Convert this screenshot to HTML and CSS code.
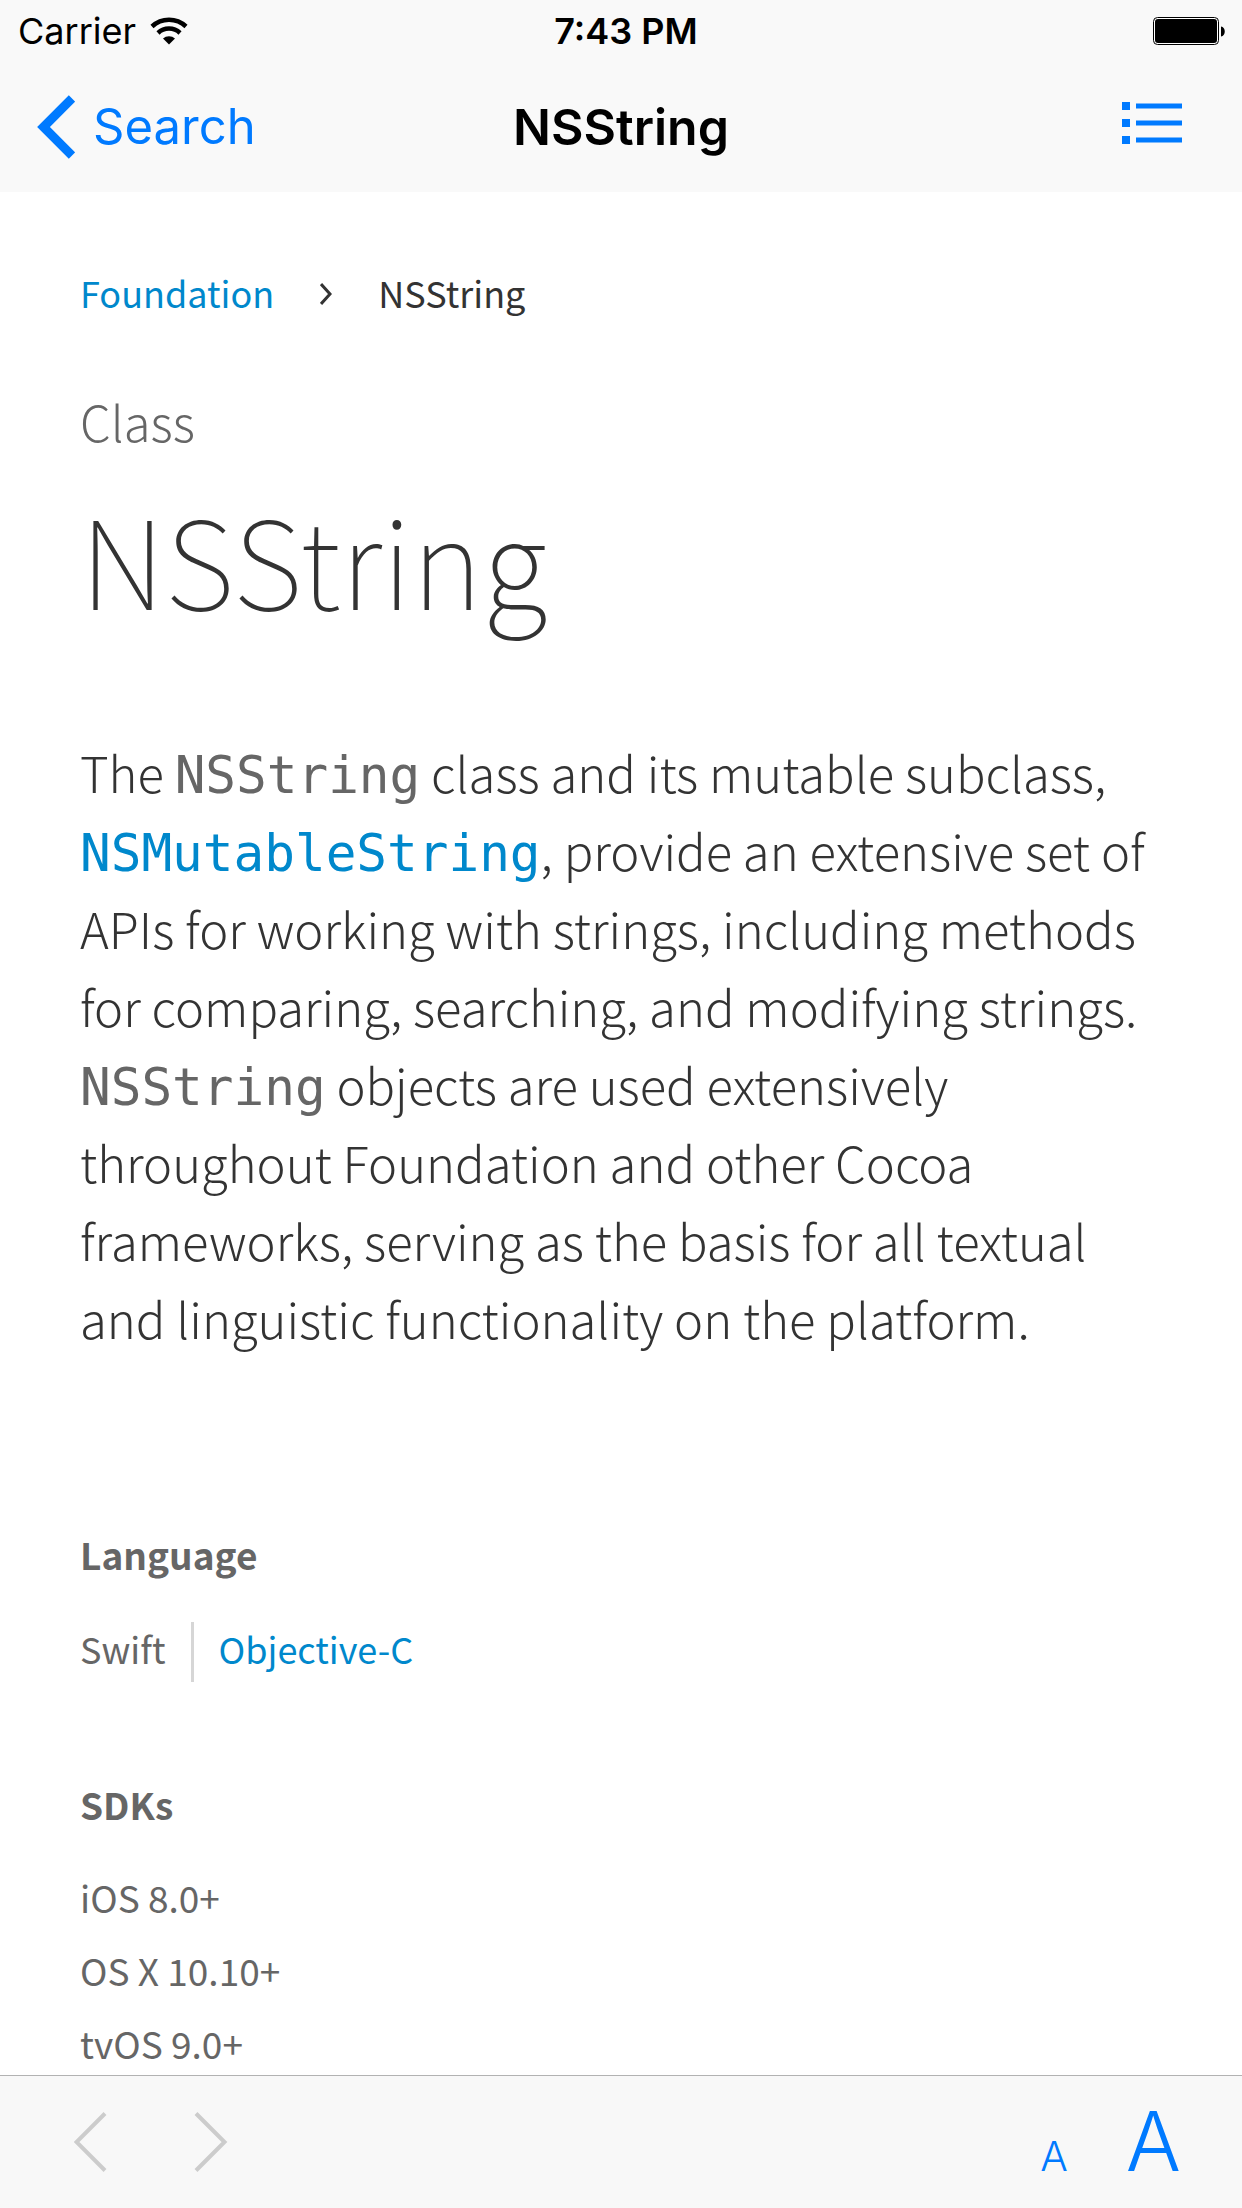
FILE: index.html
```html
<!DOCTYPE html>
<html lang="en">
<head>
<meta charset="utf-8">
<meta name="viewport" content="width=device-width, initial-scale=1">
<title>NSString</title>
<link rel="stylesheet" href="styles.css">
</head>
<body>
<header class="top">
  <div class="status">
    <div class="carrier">
      <span>Carrier</span>
      <svg class="wifi" viewBox="0 0 38 28" aria-hidden="true">
        <path d="M2 9.500A25 25 0 0 1 36 9.500" fill="none" stroke="#000" stroke-width="4.500"/>
        <path d="M8 16A16 16 0 0 1 30 16" fill="none" stroke="#000" stroke-width="4.500"/>
        <path d="M13 21.500A9 9 0 0 1 25 21.500L19 27.500Z"/>
      </svg>
    </div>
    <time class="clock">7:43 PM</time>
    <svg class="battery" viewBox="0 0 74 30" role="img" aria-label="Battery full">
      <rect x="1.500" y="1.500" width="65" height="27" rx="4" fill="#fff" stroke="#000" stroke-width="1"/>
      <rect x="3" y="3" width="62" height="24" rx="3" fill="#000"/>
      <path d="M69 10.500C74 11 74 20 69 20.500Z"/>
    </svg>
  </div>
  <nav class="navbar">
    <a class="back" href="#search">
      <svg class="back-icon" viewBox="0 0 38 64" aria-hidden="true"><path d="M35 3.500L6.500 32L35 60.500" fill="none" stroke="currentColor" stroke-width="9"/></svg>
      <span>Search</span>
    </a>
    <span class="nav-title">NSString</span>
    <button class="icon-button contents" type="button" aria-label="Contents">
      <svg class="list-icon" viewBox="0 0 60 42" aria-hidden="true"><path d="M0 0h8v8H0zM14 1.500h46v5H14zM0 17h8v8H0zM14 18.500h46v5H14zM0 34h8v8H0zM14 35.500h46v5H14z" fill="currentColor"/></svg>
    </button>
  </nav>
</header>
<main class="page">
  <nav class="crumbs" aria-label="Breadcrumb">
    <a href="#foundation">Foundation</a>
    <svg class="crumb-icon" viewBox="0 0 12 22" aria-hidden="true"><path d="M1 1L10 11L1 21" fill="none" stroke="currentColor" stroke-width="3"/></svg>
    <span>NSString</span>
  </nav>
  <p class="kind">Class</p>
  <h1 class="title">NSString</h1>
  <p class="intro">The <code>NSString</code> class and its mutable subclass, <a href="#mutable"><code>NSMutableString</code></a>, provide an extensive set of APIs for working with strings, including methods for comparing, searching, and modifying strings. <code>NSString</code> objects are used extensively throughout Foundation and other Cocoa frameworks, serving as the basis for all textual and linguistic functionality on the platform.</p>
  <section class="facts">
    <h2>Language</h2>
    <div class="languages">
      <span>Swift</span>
      <a class="language-link" href="#objc">Objective-C</a>
    </div>
  </section>
  <section class="facts">
    <h2>SDKs</h2>
    <ul class="sdks">
      <li>iOS 8.0+</li>
      <li>OS X 10.10+</li>
      <li>tvOS 9.0+</li>
    </ul>
  </section>
</main>
<footer class="toolbar">
  <button class="icon-button" type="button" aria-label="Back" disabled>
    <svg class="arrow" viewBox="0 0 34 60" aria-hidden="true"><path d="M31 1.500L2.500 30L31 58.500" fill="none" stroke="currentColor" stroke-width="4"/></svg>
  </button>
  <button class="icon-button next" type="button" aria-label="Forward" disabled>
    <svg class="arrow" viewBox="0 0 34 60" aria-hidden="true"><path d="M2 1.500L30.500 30L2 58.500" fill="none" stroke="currentColor" stroke-width="4"/></svg>
  </button>
  <div class="text-size">
    <button class="size-button small" type="button" aria-label="Smaller text">A</button>
    <button class="size-button large" type="button" aria-label="Larger text">A</button>
  </div>
</footer>
</body>
</html>
```
FILE: styles.css
```css
* { box-sizing: border-box; }
body {
  margin: 0;
  height: 100vh;
  display: flex;
  flex-direction: column;
  background: #fff;
  color: #333;
  font-family: "Noto Sans CJK SC", "Noto Sans", sans-serif;
  font-size: 36px;
  line-height: 74px;
}
h1, h2, p, ul { margin: 0; padding: 0; }
ul { list-style: none; }
a { color: #0088cc; text-decoration: none; }
svg { display: block; }
.icon-button, .size-button {
  border: 0;
  padding: 0;
  background: none;
  color: #007aff;
  font: inherit;
}
.icon-button:disabled { color: #ccc; }

.top {
  flex: none;
  background: #f9f9f9;
  color: #000;
  font-family: Inter, "Liberation Sans", sans-serif;
}
.status, .navbar {
  display: grid;
  grid-template-columns: 1fr auto 1fr;
  align-items: center;
}
.status {
  height: 62px;
  padding: 0 16px 0 18px;
  font-size: 36px;
  line-height: 62px;
}
.carrier { display: flex; align-items: center; gap: 14px; }
.wifi { width: 38px; height: 28px; }
.clock { padding-left: 8px; font-weight: 600; }
.battery { width: 74px; height: 30px; justify-self: end; }
.navbar {
  height: 130px;
  padding: 0 37px;
  font-size: 50px;
}
.back { display: flex; align-items: center; gap: 18px; color: #007aff; font-size: 49px; }
.back-icon { width: 38px; height: 64px; }
.nav-title { font-weight: 600; }
.contents { justify-self: end; padding: 0 23px 8px 0; }
.list-icon { width: 60px; height: 42px; }

.page {
  flex: 1;
  min-height: 0;
  overflow: hidden;
  padding: 63px 80px 0;
}
.crumbs { display: flex; align-items: center; gap: 46px; }
.crumb-icon { width: 12px; height: 26px; padding-top: 4px; }
.kind { margin-top: 56px; font-size: 49px; line-height: 72px; font-weight: 300; color: #666; }
.title { margin-top: 28px; font-size: 122px; line-height: 144px; font-weight: 100; }
.intro { margin-top: 104px; font-size: 49px; line-height: 78px; font-weight: 300; }
.intro code {
  font-family: "DejaVu Sans Mono", monospace;
  font-size: 51px;
  line-height: 1;
  font-weight: 400;
  color: #666;
}
.intro a code { color: inherit; }
.facts { color: #666; }
.facts h2 { margin-bottom: 20px; font-size: 37px; font-weight: 700; }
.intro + .facts { margin-top: 160px; }
.facts + .facts { margin-top: 82px; }
.languages { display: flex; align-items: baseline; gap: 25px; }
.language-link { border-left: 3px solid #d6d6d6; padding: 0 0 8px 25px; line-height: 52px; }
.sdks { font-size: 37px; line-height: 73px; }

.toolbar {
  flex: none;
  height: 133px;
  display: flex;
  align-items: center;
  padding: 0 61px 0 74px;
  border-top: 1px solid #b2b2b2;
  background: #f8f8f8;
  font-family: Inter, "Liberation Sans", sans-serif;
}
.arrow { width: 34px; height: 60px; }
.next { margin-left: 86px; }
.text-size {
  margin-left: auto;
  padding-top: 14px;
  display: flex;
  align-items: baseline;
  gap: 58px;
  font-weight: 300;
}
.text-size .small { font-size: 41px; }
.text-size .large { font-size: 82px; }
```
